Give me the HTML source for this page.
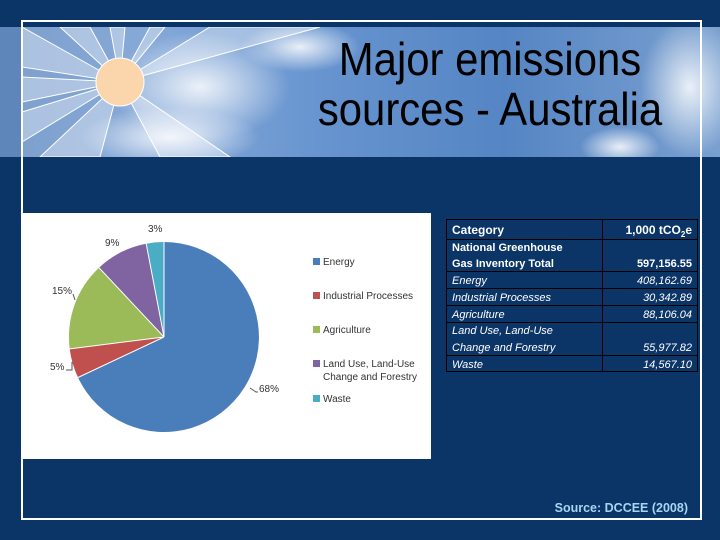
<!DOCTYPE html>
<html><head><meta charset="utf-8"><style>
body{margin:0;width:720px;height:540px;background:#0b3467;position:relative;overflow:hidden;font-family:"Liberation Sans",sans-serif}
.abs{position:absolute}
</style></head><body>
<div class="abs" style="left:0;top:27px;width:720px;height:130px;background:linear-gradient(90deg,#7d9fcc 0%,#86a9d8 20%,#6794cf 45%,#5585c4 70%,#7aa0d0 100%)"></div>
<svg class="abs" style="left:0;top:27px" width="720" height="130">
<defs><radialGradient id="c" cx="0.5" cy="0.5" r="0.5"><stop offset="0" stop-color="#fff" stop-opacity="0.85"/><stop offset="1" stop-color="#fff" stop-opacity="0"/></radialGradient></defs>
<rect x="0" y="0" width="21" height="130" fill="#5f86bb"/>
<ellipse cx="200" cy="60" rx="90" ry="55" fill="url(#c)"/>
<ellipse cx="170" cy="110" rx="90" ry="30" fill="url(#c)"/>
<ellipse cx="300" cy="20" rx="60" ry="25" fill="url(#c)"/>
<ellipse cx="690" cy="60" rx="50" ry="70" fill="url(#c)"/>
<ellipse cx="620" cy="120" rx="40" ry="20" fill="url(#c)"/>
<g fill="#fff" fill-opacity="0.35" stroke="#fff" stroke-width="1">
<polygon points="120,55 22,0 22,40"/>
<polygon points="120,55 22,50 22,75"/>
<polygon points="120,55 22,85 22,115"/>
<polygon points="120,55 40,130 100,130"/>
<polygon points="120,55 160,130 230,130"/>
<polygon points="120,55 60,0 90,0"/>
<polygon points="120,55 110,0 125,0"/>
<polygon points="120,55 150,0 165,0"/>
<polygon points="120,55 210,0 320,0"/>
</g>
<circle cx="120" cy="55" r="24" fill="#fbd6ad" stroke="#fff"/>
</svg>
<div class="abs" style="left:21px;top:20px;width:677px;height:496px;border:2px solid #fff"></div>
<div class="abs" style="left:297px;top:34px;width:386px;text-align:center;font-size:46px;line-height:50px;color:#000;transform:scaleX(0.91);transform-origin:center top;white-space:nowrap">Major emissions<br>sources - Australia</div>
<div class="abs" style="left:23px;top:213px;width:408px;height:246px;background:#fff"></div>
<svg class="abs" style="left:0;top:0" width="440" height="470" font-family="Liberation Sans" font-size="10" fill="#333">
<path d="M164,337 L164,242 A95,95 0 1,1 78,377.5 Z" fill="#4a7ebb"/>
<path d="M164,337 L78,377.5 A95,95 0 0,1 69.7,348.9 Z" fill="#c0504d"/>
<path d="M164,337 L69.7,348.9 A95,95 0 0,1 99,267.7 Z" fill="#9bbb59"/>
<path d="M164,337 L99,267.7 A95,95 0 0,1 146.2,243.7 Z" fill="#8064a2"/>
<path d="M164,337 L146.2,243.7 A95,95 0 0,1 164,242 Z" fill="#4bacc6"/>
<g stroke="#fff" stroke-width="1" fill="none"><path d="M164,337 L164,242 M164,337 L78,377.5 M164,337 L69.7,348.9 M164,337 L99,267.7 M164,337 L146.2,243.7"/></g>
<path d="M250,388 L256,392 L258,392 M72,362 L72,370 L66,370 M73,294 L75,300" stroke="#555" fill="none"/>
<text x="259" y="392">68%</text><text x="50" y="370">5%</text><text x="52" y="294">15%</text><text x="105" y="246">9%</text><text x="148" y="232">3%</text>
<rect x="313" y="258" width="7" height="7" fill="#4a7ebb"/><text x="323" y="265">Energy</text>
<rect x="313" y="292" width="7" height="7" fill="#c0504d"/><text x="323" y="299">Industrial Processes</text>
<rect x="313" y="326" width="7" height="7" fill="#9bbb59"/><text x="323" y="333">Agriculture</text>
<rect x="313" y="360" width="7" height="7" fill="#8064a2"/><text x="323" y="367">Land Use, Land-Use</text><text x="323" y="380">Change and Forestry</text>
<rect x="313" y="395" width="7" height="7" fill="#4bacc6"/><text x="323" y="402">Waste</text>
</svg>
<svg class="abs" style="left:0;top:0" width="720" height="540" font-family="Liberation Sans" font-size="11" fill="#fff">
<g stroke="#000" stroke-width="1" fill="none">
<rect x="446.5" y="219.5" width="251" height="152"/>
<path d="M602.5,219.5 V371.5 M446.5,239.5 H697.5 M446.5,271.5 H697.5 M446.5,288.5 H697.5 M446.5,305.5 H697.5 M446.5,322.5 H697.5 M446.5,355.5 H697.5"/>
</g>
<g font-weight="bold"><text x="452" y="234" font-size="12">Category</text><text x="692" y="234" font-size="12" text-anchor="end">1,000 tCO<tspan font-size="8" dy="3">2</tspan><tspan dy="-3">e</tspan></text>
<text x="452" y="251">National Greenhouse</text><text x="452" y="267">Gas Inventory Total</text><text x="692" y="267" text-anchor="end">597,156.55</text></g>
<g font-style="italic"><text x="452" y="284">Energy</text><text x="692" y="284" text-anchor="end">408,162.69</text>
<text x="452" y="301">Industrial Processes</text><text x="692" y="301" text-anchor="end">30,342.89</text>
<text x="452" y="318">Agriculture</text><text x="692" y="318" text-anchor="end">88,106.04</text>
<text x="452" y="334">Land Use, Land-Use</text><text x="452" y="351">Change and Forestry</text><text x="692" y="351" text-anchor="end">55,977.82</text>
<text x="452" y="368">Waste</text><text x="692" y="368" text-anchor="end">14,567.10</text></g>
<text x="688" y="512" text-anchor="end" font-size="12.5" font-weight="bold" fill="#a9d4f2">Source:  DCCEE (2008)</text>
</svg>
</body></html>
